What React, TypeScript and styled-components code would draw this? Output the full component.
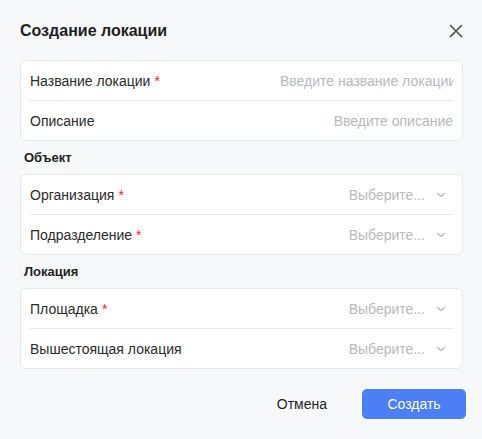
import React from "react";
import styled, {createGlobalStyle} from "styled-components";

const GlobalStyle = createGlobalStyle`
  html, body {
    margin: 0;
    padding: 0;
    background: #f7f8fa;
    font-family: "Liberation Sans", Arial, sans-serif;
  }
`

interface IField {
    label: string
    required?: boolean
    placeholder: string
    select?: boolean
}

const firstGroup: IField[] = [
    {label: 'Название локации', required: true, placeholder: 'Введите название локации'},
    {label: 'Описание', placeholder: 'Введите описание'},
]

const objectGroup: IField[] = [
    {label: 'Организация', required: true, placeholder: 'Выберите...', select: true},
    {label: 'Подразделение', required: true, placeholder: 'Выберите...', select: true},
]

const locationGroup: IField[] = [
    {label: 'Площадка', required: true, placeholder: 'Выберите...', select: true},
    {label: 'Вышестоящая локация', placeholder: 'Выберите...', select: true},
]

const Chevron = () => (
    <svg width="10" height="10" viewBox="0 0 10 10" fill="none">
        <path d="M1.5 3.5 L5 6.5 L8.5 3.5" stroke="#b0b3b8" strokeWidth="1.1" strokeLinecap="round"
              strokeLinejoin="round"/>
    </svg>
)

const CloseIcon = () => (
    <svg width="14" height="14" viewBox="0 0 14 14" fill="none">
        <path d="M1.5 1.5 L12.5 12.5 M12.5 1.5 L1.5 12.5" stroke="#4a4a4a" strokeWidth="1.6"
              strokeLinecap="round"/>
    </svg>
)

const FieldRow = ({field}: { field: IField }) => (
    <Row>
        <Label>
            {field.label}
            {field.required && <Star>*</Star>}
        </Label>
        {field.select ? (
            <SelectBox>
                <Placeholder>{field.placeholder}</Placeholder>
                <Chevron/>
            </SelectBox>
        ) : (
            <TextInput placeholder={field.placeholder}/>
        )}
    </Row>
)

const Group = ({fields}: { fields: IField[] }) => (
    <Card>
        {fields.map((f) => <FieldRow key={f.label} field={f}/>)}
    </Card>
)

const App = () => {
    return (
        <>
            <GlobalStyle/>
            <Dialog>
                <Header>
                    <Title>Создание локации</Title>
                    <CloseButton><CloseIcon/></CloseButton>
                </Header>
                <Group fields={firstGroup}/>
                <SectionTitle>Объект</SectionTitle>
                <Group fields={objectGroup}/>
                <SectionTitle>Локация</SectionTitle>
                <Group fields={locationGroup}/>
                <Footer>
                    <GhostButton>Отмена</GhostButton>
                    <PrimaryButton>Создать</PrimaryButton>
                </Footer>
            </Dialog>
        </>
    )
}

const Dialog = styled.div`
  width: 482px;
  height: 439px;
  box-sizing: border-box;
  padding: 21px 16px 20px 20px;
  display: flex;
  flex-direction: column;
`

const Header = styled.div`
  display: flex;
  align-items: center;
  justify-content: space-between;
  height: 22px;
  margin-bottom: 20px;
  padding-right: 3px;
`

const Title = styled.h2`
  margin: 0;
  font-size: 16px;
  font-weight: 700;
  color: #1f1f1f;
`

const CloseButton = styled.button`
  border: none;
  background: none;
  padding: 0;
  display: flex;
  cursor: pointer;
`

const Card = styled.div`
  width: 443px;
  box-sizing: border-box;
  background: #fff;
  border: 1px solid #e7e8eb;
  border-radius: 6px;
  padding: 0 9px;
`

const Row = styled.div`
  height: 39px;
  display: flex;
  align-items: center;
  justify-content: space-between;

  & + & {
    border-top: 1px solid #e7e8eb;
  }
`

const Label = styled.span`
  font-size: 14px;
  color: #2b2b2b;
  white-space: nowrap;
`

const Star = styled.span`
  color: #f5222d;
  margin-left: 4px;
`

const TextInput = styled.input`
  width: 173px;
  border: none;
  outline: none;
  padding: 0;
  background: transparent;
  text-align: right;
  font-family: inherit;
  font-size: 14px;
  color: #2b2b2b;

  &::placeholder {
    color: #b8b9bc;
  }
`

const SelectBox = styled.div`
  display: flex;
  align-items: center;
  gap: 11px;
  padding-right: 7px;
`

const Placeholder = styled.span`
  font-size: 14px;
  color: #b8b9bc;
`

const SectionTitle = styled.h3`
  margin: 9px 0 8px 4px;
  font-size: 13px;
  line-height: 16px;
  font-weight: 700;
  color: #1f1f1f;
`

const Footer = styled.div`
  margin-top: 20px;
  display: flex;
  justify-content: flex-end;
  align-items: center;
  gap: 20px;
`

const GhostButton = styled.button`
  border: none;
  background: none;
  padding: 0 15px;
  height: 30px;
  font-family: inherit;
  font-size: 14px;
  color: #1f1f1f;
  cursor: pointer;
`

const PrimaryButton = styled.button`
  width: 104px;
  height: 30px;
  border: none;
  border-radius: 5px;
  background: #4b7ef7;
  color: #fff;
  font-family: inherit;
  font-size: 14px;
  cursor: pointer;
`

export default App
